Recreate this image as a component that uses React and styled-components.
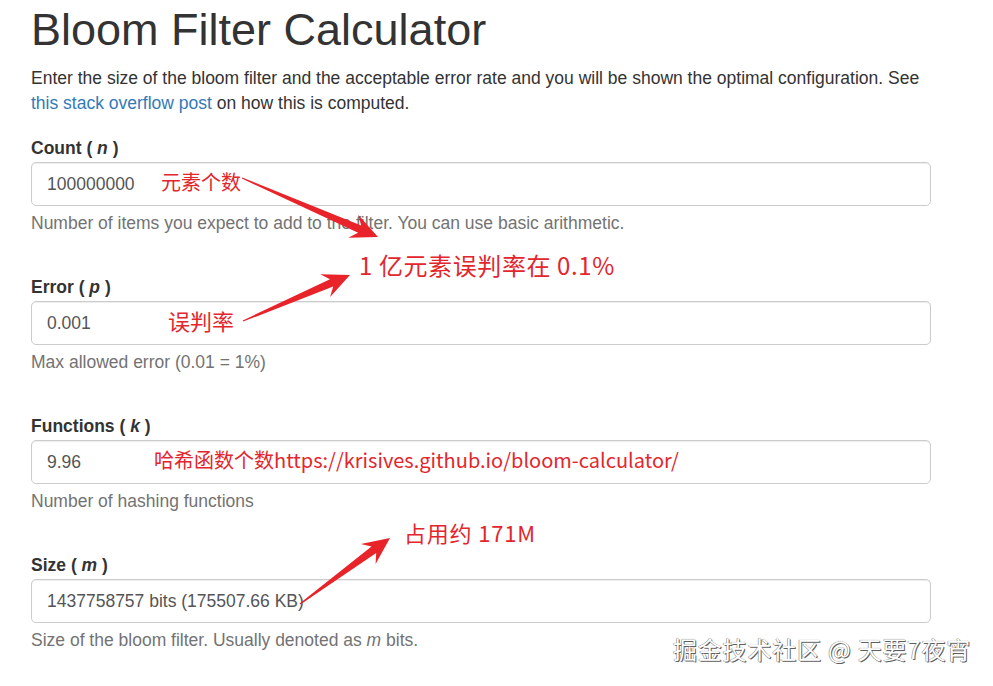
import React from "react";
import styled, { createGlobalStyle } from "styled-components";

const GlobalStyle = createGlobalStyle`
  html, body {
    margin: 0;
    padding: 0;
    background: #fff;
  }
  body {
    font-family: "Liberation Sans", Arial, Helvetica, sans-serif;
    font-size: 17.5px;
    line-height: 25px;
    color: #333;
  }
`;

const Page = styled.div`
  position: relative;
  width: 993px;
  height: 686px;
  overflow: hidden;
  box-sizing: border-box;
  padding: 0 62px 0 31px;
`;

const Title = styled.h1`
  margin: 5px 0 11.5px;
  font-size: 45px;
  line-height: 49.5px;
  font-weight: 500;
  color: #333;
`;

const Intro = styled.p`
  margin: 0 0 20px;
`;

const Link = styled.a`
  color: #337ab7;
  text-decoration: none;
`;

const Form = styled.div`
  display: flex;
  flex-direction: column;
  gap: 39.5px;
`;

const Group = styled.div`
  display: flex;
  flex-direction: column;
`;

const Label = styled.label`
  font-weight: bold;
  margin-bottom: 1px;
`;

const Field = styled.div`
  box-sizing: border-box;
  height: 44px;
  display: flex;
  align-items: center;
  padding: 0 15px;
  border: 1px solid #ccc;
  border-radius: 5px;
  box-shadow: inset 0 1px 1px rgba(0, 0, 0, 0.075);
  color: #555;
`;

const Help = styled.span`
  margin-top: 4.5px;
  color: #737373;
`;

const Overlay = styled.svg`
  position: absolute;
  inset: 0;
  pointer-events: none;
`;

const Note = styled.span`
  position: absolute;
  left: ${(p) => p.$x}px;
  top: ${(p) => p.$y - p.$size / 2}px;
  font-family: "Noto Sans CJK SC", "Liberation Sans", sans-serif;
  font-size: ${(p) => p.$size}px;
  line-height: ${(p) => p.$size}px;
  letter-spacing: ${(p) => p.$spacing || 0}px;
  color: #e3262d;
  white-space: nowrap;
`;

const Watermark = styled.span`
  position: absolute;
  right: 22px;
  bottom: 23px;
  font-family: "Noto Sans CJK SC", sans-serif;
  font-size: 24px;
  line-height: 28px;
  letter-spacing: 0.8px;
  color: #fff;
  text-shadow: 1px 1px 0 #5f5f5f, -0.5px -0.5px 0 #8a8a8a, 0 0 1px #777;
  white-space: nowrap;
`;

const fields = [
  {
    label: "Count",
    sym: "n",
    value: "100000000",
    help: "Number of items you expect to add to the filter. You can use basic arithmetic.",
  },
  { label: "Error", sym: "p", value: "0.001", help: "Max allowed error (0.01 = 1%)" },
  { label: "Functions", sym: "k", value: "9.96", help: "Number of hashing functions" },
  {
    label: "Size",
    sym: "m",
    value: "1437758757 bits (175507.66 KB)",
    help: (
      <>
        Size of the bloom filter. Usually denoted as <i>m</i> bits.
      </>
    ),
  },
];

const notes = [
  { x: 161, y: 182, size: 20, text: "元素个数" },
  { x: 359, y: 265, size: 24, spacing: 0.6, text: "1 亿元素误判率在 0.1%" },
  { x: 168, y: 320, size: 22, text: "误判率" },
  { x: 154, y: 460, size: 20, text: "哈希函数个数https://krisives.github.io/bloom-calculator/" },
  { x: 404, y: 532, size: 22, spacing: 0.8, text: "占用约 171M" },
];

const arrows = [
  { from: [242, 178], to: [378, 237] },
  { from: [243, 321], to: [350, 275] },
  { from: [300, 604], to: [390, 538] },
];

function arrowPoints([tx, ty], [px, py], hl = 27, hw = 25, sw = 8) {
  const len = Math.hypot(px - tx, py - ty);
  const dx = (px - tx) / len;
  const dy = (py - ty) / len;
  const nx = -dy;
  const ny = dx;
  const at = (back, side) => [px - dx * back + nx * side, py - dy * back + ny * side];
  const pts = [
    [tx + nx * 0.6, ty + ny * 0.6],
    at(hl - 7, sw / 2),
    at(hl, hw / 2),
    [px, py],
    at(hl, -hw / 2),
    at(hl - 7, -sw / 2),
    [tx - nx * 0.6, ty - ny * 0.6],
  ];
  return pts.map((p) => p.map((v) => v.toFixed(1)).join(",")).join(" ");
}

export default function App() {
  return (
    <>
      <GlobalStyle />
      <Page>
        <Title>Bloom Filter Calculator</Title>
        <Intro>
          Enter the size of the bloom filter and the acceptable error rate and you will be shown
          the optimal configuration. See <Link href="#">this stack overflow post</Link> on how
          this is computed.
        </Intro>
        <Form>
          {fields.map((f) => (
            <Group key={f.label}>
              <Label>
                {f.label} ( <i>{f.sym}</i> )
              </Label>
              <Field>{f.value}</Field>
              <Help>{f.help}</Help>
            </Group>
          ))}
        </Form>

        <Overlay width="993" height="686" viewBox="0 0 993 686">
          {arrows.map((a, i) => (
            <polygon key={i} points={arrowPoints(a.from, a.to)} fill="#e8232a" />
          ))}
        </Overlay>
        {notes.map((n) => (
          <Note key={n.text} $x={n.x} $y={n.y} $size={n.size} $spacing={n.spacing}>
            {n.text}
          </Note>
        ))}
        <Watermark>掘金技术社区 @ 天要7夜宵</Watermark>
      </Page>
    </>
  );
}
